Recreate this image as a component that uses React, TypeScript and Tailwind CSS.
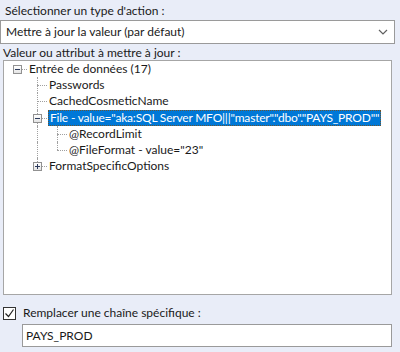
import React from "react";

type Cell = "none" | "line" | "tee" | "corner" | "root";

type Node = {
  label: string;
  cells: Cell[];
  box?: "minus" | "plus";
  selected?: boolean;
};

const rows: Node[] = [
  { label: "Entrée de données (17)", cells: ["root"], box: "minus" },
  { label: "Passwords", cells: ["none", "tee"] },
  { label: "CachedCosmeticName", cells: ["none", "tee"] },
  {
    label: 'File - value="aka:SQL Server MFO|||"master"."dbo"."PAYS_PROD""',
    cells: ["none", "tee"],
    box: "minus",
    selected: true,
  },
  { label: "@RecordLimit", cells: ["none", "line", "tee"] },
  { label: '@FileFormat - value="23"', cells: ["none", "line", "corner"] },
  { label: "FormatSpecificOptions", cells: ["none", "corner"], box: "plus" },
];

// one indent column of the tree: dotted connector + optional expander box
function TreeCell({ kind, box }: { kind: Cell; box?: "minus" | "plus" }) {
  const vertical =
    kind === "line" || kind === "tee"
      ? "h-full"
      : kind === "corner"
        ? "h-1/2"
        : "h-0";
  const across = kind === "tee" || kind === "corner" || kind === "root";

  return (
    <div className="relative flex h-full w-[20px] shrink-0">
      <div className="w-[10px] shrink-0" />
      <div className={`${vertical} border-l border-dotted border-[#a0a0a0]`} />
      {across && (
        <div className="absolute left-[10px] top-1/2 w-[10px] border-t border-dotted border-[#a0a0a0]" />
      )}
      {box && (
        <div className="absolute left-[6px] top-[4px] flex h-[9px] w-[9px] items-center justify-center border border-[#919191] bg-gradient-to-b from-white to-[#e4e4e4]">
          <svg width="5" height="5" viewBox="0 0 5 5">
            <rect x="0" y="2" width="5" height="1" fill="#2b3a5c" />
            {box === "plus" && <rect x="2" y="0" width="1" height="5" fill="#2b3a5c" />}
          </svg>
        </div>
      )}
    </div>
  );
}

export default function App() {
  return (
    <div
      className="h-[352px] w-[400px] overflow-hidden bg-[#e9edf8] text-[12px] text-[#1a1a1a]"
      style={{ fontFamily: 'Lato, "Noto Sans", sans-serif' }}
    >
      <div className="flex h-[20px] items-center pl-[5px] pt-[1px]">
        Sélectionner un type d'action :
      </div>

      <div className="flex h-[24px] w-[395px] items-center justify-between border border-[#9a9a9a] bg-white pl-[5px] pr-[6px]">
        <span>Mettre à jour la valeur (par défaut)</span>
        <svg width="10" height="6" viewBox="0 0 10 6" fill="none">
          <path d="M1 1l4 4 4-4" stroke="#606060" strokeWidth="1.2" />
        </svg>
      </div>

      <div className="flex h-[16px] items-center pl-[3px] pt-[1px]">
        Valeur ou attribut à mettre à jour :
      </div>

      <div className="ml-[3px] flex h-[235px] w-[389px] flex-col border border-[#a6a6a6] bg-white pl-[3px]">
        {rows.map((r) => (
          <div key={r.label} className="flex h-[16.2px] items-center">
            {r.cells.map((c, i) => (
              <TreeCell
                key={i}
                kind={c}
                box={i === r.cells.length - 1 ? r.box : undefined}
              />
            ))}
            <span
              className={
                r.selected
                  ? "ml-[1px] flex h-full items-center whitespace-nowrap border border-dotted border-[#6b5530] bg-[#0078d7] px-[1px] tracking-[-0.2px] text-white"
                  : "ml-[2px] whitespace-nowrap"
              }
            >
              {r.label}
            </span>
          </div>
        ))}
      </div>

      <div className="mt-[10px] flex h-[16px] items-center gap-[7px] pl-[3px]">
        <div className="flex h-[13px] w-[13px] items-center justify-center border border-[#333] bg-white">
          <svg width="11" height="11" viewBox="0 0 11 11" fill="none">
            <path d="M1.5 5.5l3 3 5-7" stroke="#222" strokeWidth="1.2" />
          </svg>
        </div>
        <span>Remplacer une chaîne spécifique :</span>
      </div>

      <div className="ml-[22px] mt-[3px] flex h-[23px] w-[370px] items-center border border-[#9a9a9a] bg-white pl-[3px]">
        PAYS_PROD
      </div>
    </div>
  );
}
